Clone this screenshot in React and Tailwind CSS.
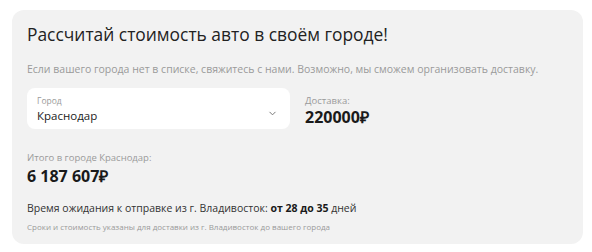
import React from 'react';

const App = () => {
  return (
    <div className="w-[592px] h-[252px] bg-white pt-[10px] pl-[12px] pr-[9px] font-['Open_Sans',sans-serif]">
      <div className="bg-[#f2f2f2] rounded-[12px] h-[234px] pl-[15px] pr-[15px] pt-[13px]">
        <h1 className="text-[17.4px] leading-[22px] text-[#222] font-normal">
          Рассчитай стоимость авто в своём городе!
        </h1>
        <p className="mt-[17px] text-[10.5px] leading-[14px] text-[#9a9a9a]">
          Если вашего города нет в списке, свяжитесь с нами. Возможно, мы сможем организовать доставку.
        </p>

        <div className="mt-[12px] flex items-start gap-[15px]">
          {/* City select */}
          <div className="w-[263px] h-[41px] bg-white rounded-[8px] pl-[10px] pr-[13px] flex items-center justify-between">
            <div className="flex flex-col">
              <span className="text-[8.5px] leading-[11px] text-[#9a9a9a]">Город</span>
              <span className="mt-[3px] text-[11.5px] leading-[14px] text-[#222]">Краснодар</span>
            </div>
            <svg className="w-[9px] h-[9px] mt-[10px]" viewBox="0 0 10 10" fill="none" stroke="#777" strokeWidth="1.1">
              <path d="M2 3.5l3 3 3-3" strokeLinecap="round" strokeLinejoin="round" />
            </svg>
          </div>

          {/* Delivery */}
          <div className="pt-[7px] flex flex-col">
            <span className="text-[9.5px] leading-[12px] text-[#9a9a9a]">Доставка:</span>
            <span className="mt-[1px] text-[16px] leading-[18px] font-bold text-[#1a1a1a]">220000₽</span>
          </div>
        </div>

        <div className="mt-[23px] flex flex-col">
          <span className="text-[9.5px] leading-[12px] text-[#9a9a9a]">Итого в городе Краснодар:</span>
          <span className="mt-[2px] text-[16px] leading-[20px] font-bold text-[#1a1a1a]">6 187 607₽</span>
        </div>

        <p className="mt-[15px] text-[10.5px] leading-[15px] text-[#333]">
          Время ожидания к отправке из г. Владивосток: <span className="font-bold text-[#1a1a1a]">от 28 до 35</span> дней
        </p>
        <p className="mt-[6px] text-[8px] leading-[10px] text-[#9a9a9a]">
          Сроки и стоимость указаны для доставки из г. Владивосток до вашего города
        </p>
      </div>
    </div>
  );
};

export default App;
